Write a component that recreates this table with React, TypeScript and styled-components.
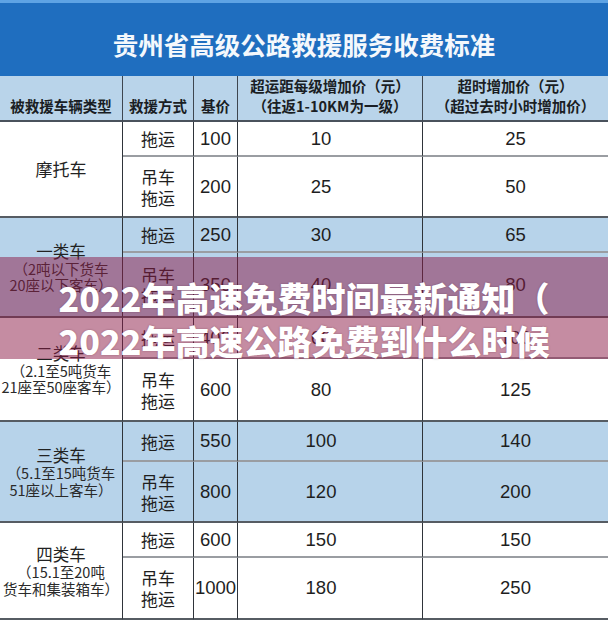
import React from "react";
import styled, { createGlobalStyle } from "styled-components";

const GlobalStyle = createGlobalStyle`
  html, body { margin: 0; padding: 0; background: #ffffff; }
  * { box-sizing: border-box; }
`;

const CJK = `"Noto Sans CJK SC", "Noto Sans", sans-serif`;
const NUM = `"Liberation Sans", Arial, sans-serif`;

type Row = { method: string[]; base: string; dist: string; time: string; h: number };
type Group = { name: string; big?: boolean; sub: string[]; blue: boolean; rows: Row[] };

const groups: Group[] = [
  {
    name: "摩托车",
    big: true,
    sub: [],
    blue: false,
    rows: [
      { method: ["拖运"], base: "100", dist: "10", time: "25", h: 35 },
      { method: ["吊车", "拖运"], base: "200", dist: "25", time: "50", h: 61 },
    ],
  },
  {
    name: "一类车",
    sub: ["（2吨以下货车", "20座以下客车）"],
    blue: true,
    rows: [
      { method: ["拖运"], base: "250", dist: "30", time: "65", h: 35 },
      { method: ["吊车", "拖运"], base: "350", dist: "40", time: "80", h: 65 },
    ],
  },
  {
    name: "二类车",
    sub: ["（2.1至5吨货车", "21座至50座客车）"],
    blue: false,
    rows: [
      { method: ["拖运"], base: "400", dist: "60", time: "100", h: 41 },
      { method: ["吊车", "拖运"], base: "600", dist: "80", time: "125", h: 63 },
    ],
  },
  {
    name: "三类车",
    sub: ["（5.1至15吨货车", "51座以上客车）"],
    blue: true,
    rows: [
      { method: ["拖运"], base: "550", dist: "100", time: "140", h: 40 },
      { method: ["吊车", "拖运"], base: "800", dist: "120", time: "200", h: 61 },
    ],
  },
  {
    name: "四类车",
    sub: ["（15.1至20吨", "货车和集装箱车）"],
    blue: false,
    rows: [
      { method: ["拖运"], base: "600", dist: "150", time: "150", h: 35 },
      { method: ["吊车", "拖运"], base: "1000", dist: "180", time: "250", h: 62 },
    ],
  },
];

const Page = styled.div`
  position: relative;
  width: 608px;
  height: 621px;
  overflow: hidden;
  background: #ffffff;
`;

const TitleBand = styled.div`
  height: 76px;
  border-top: 3px solid #5ea3e4;
  background: #1f6ebf;
  display: flex;
  align-items: center;
  justify-content: center;
  padding-top: 7px;
  color: #f4f8fc;
  font-family: ${CJK};
  font-weight: 700;
  font-size: 25.5px;
`;

const Table = styled.div<{ $rows: string }>`
  display: grid;
  grid-template-columns: 123px 71px 44px 185px 185px;
  grid-template-rows: ${(p) => p.$rows};
  width: 608px;
  overflow: hidden;
`;

const HeadCell = styled.div<{ $last?: boolean }>`
  background: #b9d4ea;
  border-right: ${(p) => (p.$last ? "none" : "1px solid #3e4650")};
  border-bottom: 2px solid #4a525c;
  display: flex;
  flex-direction: column;
  align-items: center;
  justify-content: flex-end;
  padding-bottom: 4px;
  font-family: ${CJK};
  font-weight: 700;
  font-size: 14.5px;
  line-height: 20px;
  color: #1a1e24;
  white-space: nowrap;
`;

const Cell = styled.div<{ $blue: boolean; $edge: "inner" | "group"; $last?: boolean; $shift?: boolean }>`
  background: ${(p) => (p.$blue ? "#b7d3ea" : "#ffffff")};
  border-right: ${(p) => (p.$last ? "none" : "1.5px solid #2f343a")};
  border-bottom: ${(p) => (p.$edge === "group" ? "2px solid #565c63" : "2px solid #9a9da2")};
  display: flex;
  flex-direction: column;
  align-items: center;
  justify-content: center;
  padding-right: ${(p) => (p.$shift ? "18px" : "0")};
  color: #1d1d1d;
  white-space: nowrap;
`;

const CategoryCell = styled(Cell)`
  grid-row: span 2;
`;

const CatName = styled.div<{ $big?: boolean }>`
  font-family: ${CJK};
  font-size: ${(p) => (p.$big ? "17px" : "16.5px")};
  line-height: 20px;
  color: #222;
`;

const CatSub = styled.div`
  font-family: ${CJK};
  font-size: 14.5px;
  line-height: 16.5px;
  color: #2a2a2a;
`;

const MethodText = styled.div`
  font-family: ${CJK};
  font-size: 17px;
  line-height: 21px;
  color: #1e1e1e;
`;

const Num = styled.div`
  font-family: ${NUM};
  font-size: 18.5px;
  color: #1e1e1e;
`;

const Overlay = styled.div`
  position: absolute;
  left: 0;
  right: 0;
  top: 257px;
  height: 102px;
  background: rgba(140, 25, 70, 0.5);
  display: flex;
  flex-direction: column;
  align-items: center;
  padding-top: 19px;
  color: #ffffff;
  font-family: ${CJK};
  font-weight: 900;
  font-size: 34px;
  line-height: 43px;
  text-shadow: 0 0 2px rgba(60, 0, 30, 0.35);
  white-space: nowrap;
`;

export default function App() {
  const rowSizes = ["46px", ...groups.flatMap((g) => g.rows.map((r) => `${r.h}px`))].join(" ");
  return (
    <>
      <GlobalStyle />
      <Page>
        <TitleBand>贵州省高级公路救援服务收费标准</TitleBand>
        <Table $rows={rowSizes}>
          <HeadCell>被救援车辆类型</HeadCell>
          <HeadCell>救援方式</HeadCell>
          <HeadCell>基价</HeadCell>
          <HeadCell>
            <span>超运距每级增加价（元）</span>
            <span>（往返1-10KM为一级）</span>
          </HeadCell>
          <HeadCell $last>
            <span>超时增加价（元）</span>
            <span>（超过去时小时增加价）</span>
          </HeadCell>
          {groups.map((g) => (
            <React.Fragment key={g.name}>
              <CategoryCell $blue={g.blue} $edge="group">
                <CatName $big={g.big}>{g.name}</CatName>
                {g.sub.map((s) => (
                  <CatSub key={s}>{s}</CatSub>
                ))}
              </CategoryCell>
              {g.rows.map((r, i) => {
                const edge = i === g.rows.length - 1 ? "group" : "inner";
                return (
                  <React.Fragment key={i}>
                    <Cell $blue={g.blue} $edge={edge}>
                      {r.method.map((m) => (
                        <MethodText key={m}>{m}</MethodText>
                      ))}
                    </Cell>
                    <Cell $blue={g.blue} $edge={edge}>
                      <Num>{r.base}</Num>
                    </Cell>
                    <Cell $blue={g.blue} $edge={edge} $shift>
                      <Num>{r.dist}</Num>
                    </Cell>
                    <Cell $blue={g.blue} $edge={edge} $last>
                      <Num>{r.time}</Num>
                    </Cell>
                  </React.Fragment>
                );
              })}
            </React.Fragment>
          ))}
        </Table>
        <Overlay>
          <span>2022年高速免费时间最新通知（</span>
          <span>2022年高速公路免费到什么时候</span>
        </Overlay>
      </Page>
    </>
  );
}
